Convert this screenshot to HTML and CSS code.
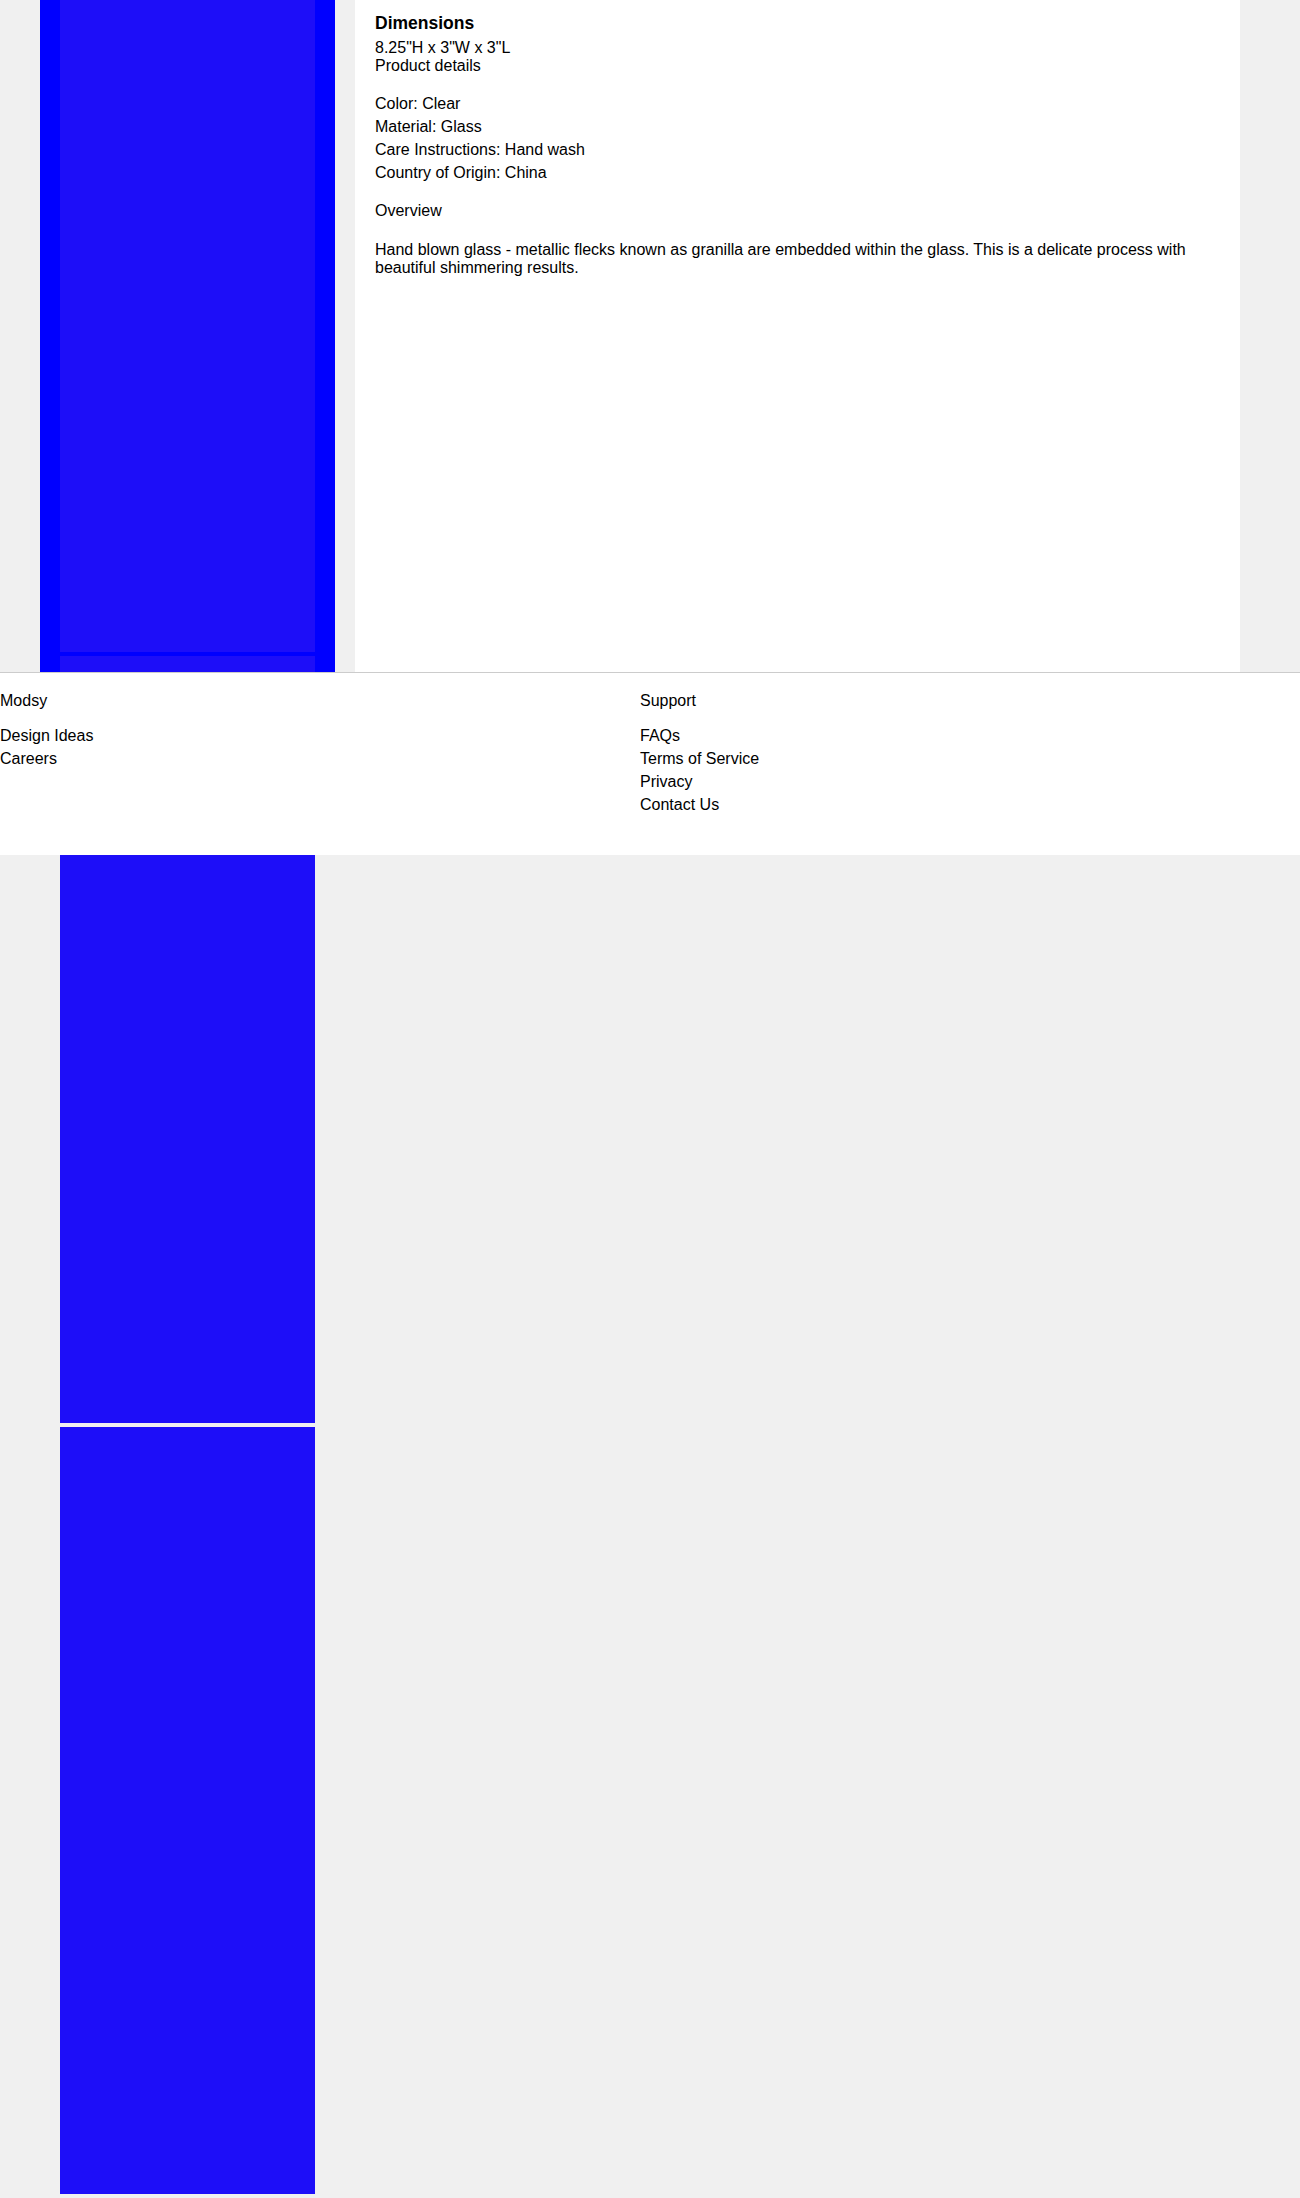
FILE: index.html
```html
<!DOCTYPE html>
<html lang="en">
<head>
<meta charset="utf-8">
<title>Product</title>
<link rel="stylesheet" href="styles.css">
</head>
<body>
<div class="page">
  <div class="gallery">
    <div class="shot shot-first"></div>
    <div class="shot"></div>
    <div class="shot"></div>
  </div>
  <div class="panel">
    <h3 class="dim-title">Dimensions</h3>
    <div class="dim-value">8.25"H x 3"W x 3"L</div>
    <div class="details-title">Product details</div>
    <ul class="specs">
      <li>Color: Clear</li>
      <li>Material: Glass</li>
      <li>Care Instructions: Hand wash</li>
      <li>Country of Origin: China</li>
    </ul>
    <div class="overview-title">Overview</div>
    <p class="overview">Hand blown glass - metallic flecks known as granilla are embedded within the glass. This is a delicate process with beautiful shimmering results.</p>
  </div>
</div>
<footer class="footer">
  <div class="fcol">
    <div class="fhead">Modsy</div>
    <ul class="flinks">
      <li>Design Ideas</li>
      <li>Careers</li>
    </ul>
  </div>
  <div class="fcol">
    <div class="fhead">Support</div>
    <ul class="flinks">
      <li>FAQs</li>
      <li>Terms of Service</li>
      <li>Privacy</li>
      <li>Contact Us</li>
    </ul>
  </div>
</footer>
</body>
</html>
```
FILE: styles.css
```css
* { box-sizing: border-box; }
html, body { margin: 0; padding: 0; }
body {
  background: #f0f0f0;
  font-family: "Liberation Sans", Arial, sans-serif;
  font-size: 16px;
  color: #000;
  min-height: 2198px;
}
.page {
  display: flex;
  align-items: flex-start;
  gap: 20px;
  padding: 0 60px 0 40px;
  height: 672px;
}
.gallery {
  width: 295px;
  flex: 0 0 295px;
  height: 672px;
  background: #0000ff;
  padding: 0 20px;
}
.shot {
  display: block;
  height: 767px;
  margin-bottom: 4px;
  background: #1d0ef8;
}
.shot-first {
  height: 652px;
}
.panel {
  flex: 1;
  align-self: stretch;
  background: #fff;
  padding: 13px 20px 0;
}
.dim-title {
  margin: 0 0 5px;
  font-size: 17.5px;
  font-weight: bold;
  line-height: normal;
}
.dim-value, .details-title, .overview-title { line-height: normal; }
.specs {
  list-style: none;
  margin: 17px 0 18px;
  padding: 0;
}
.specs li { line-height: 23px; }
.overview {
  margin: 21px 0 0;
  line-height: normal;
}
.footer {
  position: relative;
  z-index: 1;
  height: 183px;
  background: #fff;
  border-top: 1px solid #cccccc;
  padding-top: 19px;
  display: grid;
  grid-template-columns: 640px 1fr;
}
.fhead { line-height: normal; }
.flinks {
  list-style: none;
  margin: 14px 0 0;
  padding: 0;
}
.flinks li { line-height: 23px; }
```
